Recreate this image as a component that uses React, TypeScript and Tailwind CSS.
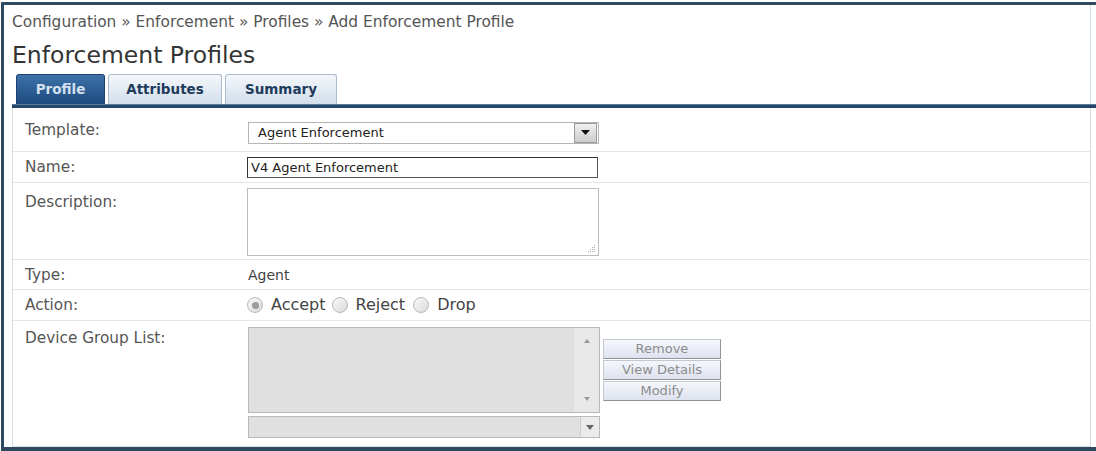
import React from "react";

const FONT = "font-['DejaVu_Sans',Verdana,sans-serif]";

export default function App() {
  return (
    <div className={`w-[1096px] h-[451px] overflow-hidden bg-white pt-[2px] pl-[1px] ${FONT}`}>
      <div className="h-[449px] border-t-[3px] border-l-[3px] border-b-[4px] border-[#2f4961] flex flex-col">
        {/* header: breadcrumb, title, tabs */}
        <div className="mr-[5px] pl-[8px] border-r border-[#cfe0ea] flex flex-col">
          <p className="mt-[8px] text-[15.4px] leading-[18px] text-[#555] whitespace-nowrap">
            Configuration » Enforcement » Profiles » Add Enforcement Profile
          </p>
          <h1 className="mt-[10px] text-[23.5px] leading-[28px] text-[#333] whitespace-nowrap">
            Enforcement Profiles
          </h1>
          <div className="mt-[5px] ml-[4px] flex items-end gap-[3px] h-[30px]">
            <Tab label="Profile" active width="w-[89px]" />
            <Tab label="Attributes" width="w-[114px]" />
            <Tab label="Summary" width="w-[112px]" />
          </div>
        </div>
        <div className="ml-[8px] h-[4px] bg-[#254669] border-t border-[#557aa0]" />

        {/* form table */}
        <div className="flex-1 ml-[8px] mr-[5px] border-l border-r border-b border-[#d3dde6] flex flex-col">
          <Row label="Template:" className="h-[44px] items-center">
            <Select />
          </Row>
          <Row label="Name:" className="h-[31px] items-center">
            <div className="w-[351px] h-[21px] -ml-[1px] border border-[#555] border-t-[#333] border-l-[#333] bg-white px-[3px] text-[13px] leading-[19px] text-[#222]">
              V4 Agent Enforcement
            </div>
          </Row>
          <Row label="Description:" className="h-[77px] items-start" labelClass="pt-[11px]">
            <TextArea />
          </Row>
          <Row label="Type:" className="h-[30px] items-center">
            <span className="text-[14px] leading-[18px] text-[#444]">Agent</span>
          </Row>
          <Row label="Action:" className="h-[31px] items-center">
            <div className="flex items-center text-[16px] leading-[18px] text-[#444] -ml-[1px]">
              <Radio checked />
              <span className="ml-[8px]">Accept</span>
              <span className="ml-[6px]"><Radio /></span>
              <span className="ml-[8px]">Reject</span>
              <span className="ml-[8px]"><Radio /></span>
              <span className="ml-[8px]">Drop</span>
            </div>
          </Row>
          <Row label="Device Group List:" className="flex-1 items-start border-b-0" labelClass="pt-[9px]">
            <div className="mt-[6px] flex items-start">
              <div className="flex flex-col gap-[3px]">
                <ListBox />
                <Combo />
              </div>
              <div className="ml-[3px] mt-[12px] flex flex-col gap-[1px]">
                <DisabledButton label="Remove" />
                <DisabledButton label="View Details" />
                <DisabledButton label="Modify" />
              </div>
            </div>
          </Row>
        </div>
      </div>
    </div>
  );
}

function Tab({ label, active, width }: { label: string; active?: boolean; width: string }) {
  return (
    <div
      className={
        active
          ? `${width} h-[30px] rounded-t-[3px] bg-linear-to-b from-[#3d72a9] to-[#1d4a7e] border border-b-0 border-[#1d4170] flex items-center justify-center text-[13.5px] font-bold text-[#d3e1ef]`
          : `${width} h-[30px] rounded-t-[3px] bg-linear-to-b from-[#f4f7fb] to-[#d3dfeb] border border-b-0 border-[#a9bccf] flex items-center justify-center text-[13.5px] font-bold text-[#1f3b5c]`
      }
    >
      {label}
    </div>
  );
}

function Row({
  label,
  className,
  labelClass,
  children,
}: {
  label: string;
  className?: string;
  labelClass?: string;
  children: React.ReactNode;
}) {
  return (
    <div className={`flex border-b border-[#e1e6eb] ${className ?? ""}`}>
      <div className={`w-[235px] shrink-0 pl-[12px] text-[15.3px] leading-[16px] text-[#555] ${labelClass ?? ""}`}>
        {label}
      </div>
      <div className="flex-1">{children}</div>
    </div>
  );
}

function Select() {
  return (
    <div className="mt-[6px] w-[351px] h-[22px] border border-[#b4b4b4] bg-white flex items-center">
      <span className="flex-1 pl-[9px] text-[13px] leading-[18px] text-[#222]">Agent Enforcement</span>
      <span className="w-[23px] h-[20px] mr-[1px] border border-[#9a9a9a] bg-linear-to-b from-[#f0f0f0] to-[#cdcdcd] flex items-center justify-center">
        <svg width="9" height="5" viewBox="0 0 9 5">
          <path d="M0 0h9L4.5 5z" fill="#111" />
        </svg>
      </span>
    </div>
  );
}

function TextArea() {
  return (
    <div className="relative mt-[5px] -ml-[1px] w-[352px] h-[68px] border border-[#bcbcbc] bg-white">
      <svg className="absolute right-[2px] bottom-[2px]" width="9" height="9" viewBox="0 0 9 9">
        <rect x="7" y="1" width="1" height="1" fill="#aaa" />
        <rect x="5" y="3" width="1" height="1" fill="#aaa" />
        <rect x="7" y="3" width="1" height="1" fill="#aaa" />
        <rect x="3" y="5" width="1" height="1" fill="#aaa" />
        <rect x="5" y="5" width="1" height="1" fill="#aaa" />
        <rect x="7" y="5" width="1" height="1" fill="#aaa" />
        <rect x="1" y="7" width="1" height="1" fill="#aaa" />
        <rect x="3" y="7" width="1" height="1" fill="#aaa" />
        <rect x="5" y="7" width="1" height="1" fill="#aaa" />
        <rect x="7" y="7" width="1" height="1" fill="#aaa" />
      </svg>
    </div>
  );
}

function Radio({ checked }: { checked?: boolean }) {
  return (
    <span className="w-[16px] h-[16px] rounded-full border border-[#b9b9b9] bg-linear-to-br from-[#fafafa] to-[#dadada] flex items-center justify-center">
      {checked ? <span className="w-[7px] h-[7px] rounded-full bg-[#9c9c9c]" /> : null}
    </span>
  );
}

function ListBox() {
  return (
    <div className="w-[352px] h-[86px] border border-[#b9b9b9] bg-[#e0e0e0] flex">
      <div className="flex-1" />
      <div className="w-[25px] bg-[#e8e8e8] flex flex-col items-center justify-between py-[11px]">
        <svg width="6" height="4" viewBox="0 0 6 4">
          <path d="M0 4h6L3 0z" fill="#9a9a9a" />
        </svg>
        <svg width="6" height="4" viewBox="0 0 6 4">
          <path d="M0 0h6L3 4z" fill="#9a9a9a" />
        </svg>
      </div>
    </div>
  );
}

function Combo() {
  return (
    <div className="w-[352px] h-[22px] border border-[#b9b9b9] bg-[#e0e0e0] flex">
      <div className="flex-1" />
      <div className="w-[19px] border-l border-[#cfcfcf] bg-[#ebebeb] flex items-center justify-center">
        <svg width="8" height="5" viewBox="0 0 8 5">
          <path d="M0 0h8L4 5z" fill="#666" />
        </svg>
      </div>
    </div>
  );
}

function DisabledButton({ label }: { label: string }) {
  return (
    <div className="w-[118px] h-[20px] border border-[#c4c8d0] border-r-[#8e939b] border-b-[#8e939b] bg-linear-to-b from-[#f5f7fc] to-[#dde2ee] flex items-center justify-center text-[13px] leading-[16px] text-[#8c8c8c]">
      {label}
    </div>
  );
}
